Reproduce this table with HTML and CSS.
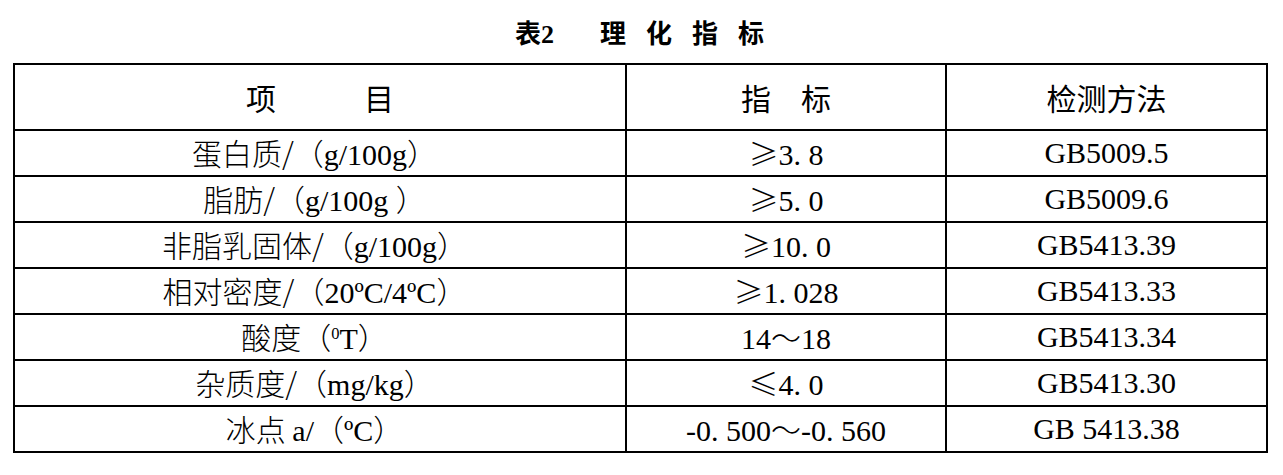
FILE: index.html
```html
<!DOCTYPE html>
<html lang="zh-CN">
<head>
<meta charset="utf-8">
<title>表2 理化指标</title>
<link rel="stylesheet" href="styles.css">
</head>
<body>
<div class="page">
  <h1 class="title"><span class="t-num">表<span class="lat">2</span></span><span class="t-word">理</span><span class="t-word">化</span><span class="t-word">指</span><span class="t-word">标</span></h1>
  <table class="spec">
    <colgroup>
      <col class="c1">
      <col class="c2">
      <col class="c3">
    </colgroup>
    <thead>
      <tr>
        <th><span class="spread-wide">项</span><span>目</span></th>
        <th><span class="spread">指</span><span>标</span></th>
        <th>检测方法</th>
      </tr>
    </thead>
    <tbody>
      <tr><td>蛋白质/（<span class="lat">g/100g</span>）</td><td class="num"><span class="sym">≥</span>3<span class="dot">.</span>8</td><td class="lat">GB5009.5</td></tr>
      <tr><td>脂肪/（<span class="lat">g/100g&nbsp;</span>）</td><td class="num"><span class="sym">≥</span>5<span class="dot">.</span>0</td><td class="lat">GB5009.6</td></tr>
      <tr><td>非脂乳固体/（<span class="lat">g/100g</span>）</td><td class="num"><span class="sym">≥</span>10<span class="dot">.</span>0</td><td class="lat">GB5413.39</td></tr>
      <tr><td>相对密度/（<span class="lat">20ºC/4ºC</span>）</td><td class="num"><span class="sym">≥</span>1<span class="dot">.</span>028</td><td class="lat">GB5413.33</td></tr>
      <tr><td>酸度（<span class="lat"><sup>0</sup>T</span>）</td><td class="num">14<span class="sym">～</span>18</td><td class="lat">GB5413.34</td></tr>
      <tr><td>杂质度/（<span class="lat">mg/kg</span>）</td><td class="num"><span class="sym">≤</span>4<span class="dot">.</span>0</td><td class="lat">GB5413.30</td></tr>
      <tr><td>冰点 <span class="lat">a/</span>（<span class="lat">ºC</span>）</td><td class="num">-0<span class="dot">.</span>500<span class="sym">～</span>-0<span class="dot">.</span>560</td><td class="lat">GB 5413.38</td></tr>
    </tbody>
  </table>
</div>
</body>
</html>
```

FILE: styles.css
```css
html, body {
  margin: 0;
  padding: 0;
  background: #fff;
}

body {
  font-family: "Noto Sans CJK SC", "Liberation Serif", serif;
  color: #000;
}

.page {
  padding: 0 17px 0 13px;
}

.title {
  margin: 0;
  height: 63px;
  display: flex;
  justify-content: center;
  align-items: center;
  font-size: 26px;
  font-weight: bold;
  padding-left: 0;
  color: #000;
}

.title .lat {
  font-family: "Liberation Serif", serif;
  font-weight: bold;
}

.t-num {
  margin-right: 46px;
}

.t-word {
  margin-right: 20px;
}

.t-word:last-child {
  margin-right: 0;
}

.spec {
  width: 1253px;
  border-collapse: collapse;
  table-layout: fixed;
}

.c1 { width: 612px; }
.c2 { width: 320px; }
.c3 { width: 321px; }

.spec th,
.spec td {
  border: 2px solid #000;
  text-align: center;
  padding: 0;
}

.spec th {
  height: 64px;
  font-weight: normal;
  font-size: 30px;
}

.spec td {
  height: 44px;
  font-size: 30px;
  line-height: 1;
  font-family: "Liberation Serif", "Noto Sans CJK SC", serif;
}

.spec td:first-child {
  font-family: "Noto Sans CJK SC", sans-serif;
  font-weight: 300;
  padding-right: 11px;
}

.lat {
  font-family: "Liberation Serif", serif;
}

.sym {
  font-family: "Noto Sans CJK SC", sans-serif;
  font-weight: 300;
}

.dot {
  margin-right: 0.25em;
}

.spread-wide {
  margin-right: 88px;
}

.spread {
  margin-right: 30px;
}

sup {
  font-size: 0.55em;
  vertical-align: 0.6em;
  line-height: 0;
}
```
